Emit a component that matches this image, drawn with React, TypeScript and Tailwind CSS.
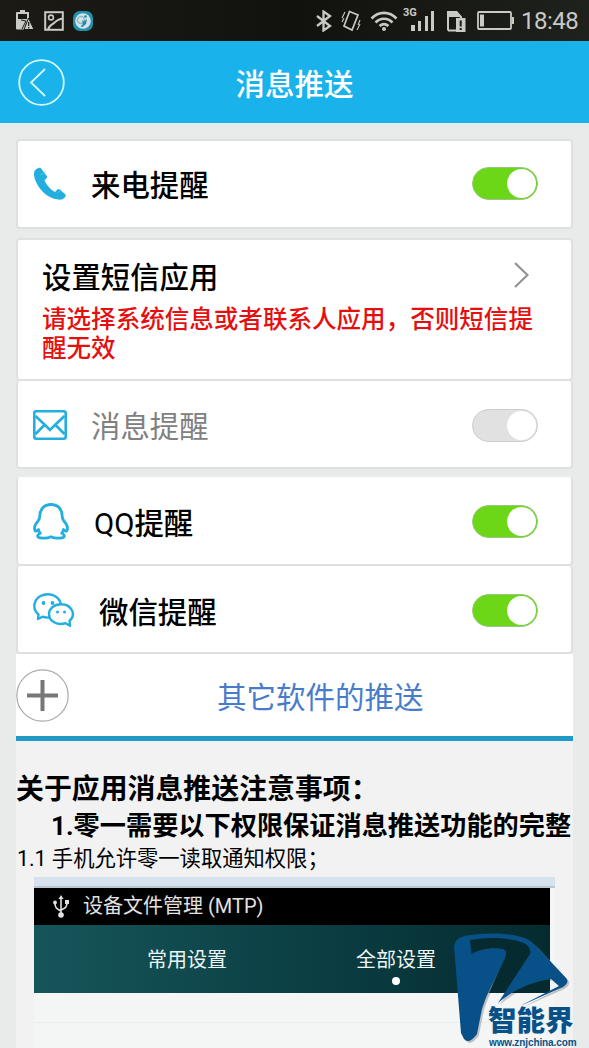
import React, { useState } from 'react';
import clsx from 'clsx';

const ICON_BLUE = '#22afdf';

function StatusBar() {
  return (
    <div className="flex h-[41px] items-center bg-gradient-to-r from-[#1c1a15] via-[#11120e] to-[#1f211c] px-4 text-[#c9c9c5]">
      <svg className="h-[22px] w-[18px]" viewBox="0 0 18 22" fill="currentColor">
        <path d="M4 2V0h5v2h4v8l-4.500 9.500H1a1 1 0 0 1-1-1V3a1 1 0 0 1 1-1zM2 4v5h9V4z" fillRule="evenodd" />
        <path d="M6 19l4-8-5-1" stroke="#191914" strokeWidth="1" fill="none" />
        <path d="M12.500 8L18 19.500H8z" stroke="#191914" strokeWidth="1" />
        <path d="M12.700 12v4M12.700 17v1.500" stroke="#191914" strokeWidth="1.200" />
      </svg>
      <svg className="ml-[10px] h-5 w-5" viewBox="0 0 20 20" fill="none" stroke="currentColor" strokeWidth="2">
        <rect x="1.200" y="1.200" width="17.600" height="17.600" />
        <circle cx="7" cy="6.500" r="2.400" strokeWidth="1.600" />
        <path d="M4 19c1-5 4-5 6-7s4-4 9-4.500" />
      </svg>
      <svg className="ml-[9px] h-5 w-5" viewBox="0 0 20 20">
        <rect width="20" height="20" rx="7" fill="#2390ae" />
        <circle cx="10" cy="10" r="7.800" fill="#d3e3e7" />
        <circle cx="8" cy="9" r="3.500" fill="none" stroke="#8fb9c6" strokeWidth="1.500" />
        <path d="M9 9l2 1.500 3-2.500-1 5-3.500 3-2-.5 2.500-2.500z" fill="#2185ad" />
        <circle cx="12.500" cy="5.500" r="1.300" fill="#2185ad" />
      </svg>

      <svg className="ml-auto h-[22px] w-4" viewBox="0 0 16 22" fill="none" stroke="currentColor" strokeWidth="2.300">
        <path d="M1 6l13 10-6.500 4.500v-19L14 6 1 16" />
      </svg>
      <svg className="ml-[9px] h-[22px] w-5" viewBox="0 0 20 22" fill="none" stroke="currentColor" strokeWidth="1.700">
        <path d="M8.500 1.500l8.500 3.500-6 15-8-4z" />
        <path d="M1 8l3-6M1 12l2-4M19 14l-3 6M19 10l-2 5" strokeWidth="1.100" />
      </svg>
      <svg className="ml-[9px] h-[22px] w-7" viewBox="0 0 28 22" fill="none" stroke="currentColor" strokeWidth="2.600">
        <path d="M1.500 8.500c7-7.500 18-7.500 25 0M5.500 12.500c5-5 12-5 17 0M9.500 16c3-2.500 6-2.500 9 0" />
        <circle cx="14" cy="19" r="2" fill="currentColor" stroke="none" />
      </svg>
      <div className="mb-[3px] ml-[5px] flex h-[24px] w-[33px] items-end">
        <span className="w-[8px] shrink-0 self-start font-['Roboto',sans-serif] text-[11px] leading-[11px] font-bold">3G</span>
        <span className="h-[6px] w-[4px] bg-current" />
        <span className="ml-[3px] h-[10px] w-[3px] bg-current" />
        <span className="ml-[4px] h-[15px] w-[3px] bg-current" />
        <span className="ml-[3px] h-[20px] w-[3px] bg-current" />
      </div>
      <svg className="ml-[11px] h-[22px] w-[19px]" viewBox="0 0 19 22" fill="none" stroke="currentColor">
        <path d="M1 20.500V2h8l5 5v2M1 20.500h8" strokeWidth="2" />
        <path d="M1 1h9l4 5v1H1z" fill="currentColor" stroke="none" />
        <rect x="9" y="8" width="9.500" height="14" fill="currentColor" stroke="none" />
        <path d="M13.700 10.500v6M13.700 18v2" stroke="#191914" strokeWidth="2" />
      </svg>
      <svg className="ml-[11px] h-[20px] w-[37px]" viewBox="0 0 37 20" fill="none" stroke="currentColor">
        <rect x="1" y="1" width="33" height="17" rx="1" strokeWidth="1.800" />
        <path d="M3 3.500h4v12H3z" fill="currentColor" stroke="none" />
        <path d="M36 6v7" strokeWidth="2" />
      </svg>
      <span className="-mr-[6px] ml-[7px] w-[58px] pt-px font-['Roboto',sans-serif] text-[24px] leading-6 tracking-[-0.5px]">18:48</span>
    </div>
  );
}

function Header() {
  return (
    <header className="grid h-[82px] grid-cols-[1fr_auto_1fr] items-center bg-[#19b2ea] pr-[18px] pl-[18px] text-white">
      <button type="button" aria-label="返回">
        <svg className="h-[47px] w-[47px]" viewBox="0 0 47 47" fill="none" stroke="#d3faff" strokeWidth="1.800">
          <circle cx="23.500" cy="23.500" r="22.300" />
          <path d="M27 10L13 23.500 27 37" />
        </svg>
      </button>
      <h1 className="pt-[5px] text-[29.5px] leading-9 font-medium">消息推送</h1>
    </header>
  );
}

function Toggle({ on, disabled, onChange }: { on: boolean; disabled?: boolean; onChange?: () => void }) {
  return (
    <button
      type="button"
      role="switch"
      aria-checked={on}
      disabled={disabled}
      onClick={onChange}
      className={clsx(
        'ml-auto flex h-[33px] w-[66px] items-center rounded-full border px-px',
        on || disabled ? 'justify-end' : 'justify-start',
        on ? 'border-[#9bc489] bg-[#6bd716]' : 'border-[#cdcdcd] bg-[#e1e1e1]'
      )}
    >
      <span className="h-[29px] w-[29px] rounded-full bg-white" />
    </button>
  );
}

function PhoneIcon() {
  return (
    <svg className="mt-[2px] h-[34px] w-[34px]" viewBox="0 0 34 34" fill={ICON_BLUE}>
      <path d="M5.500 1C2 2 .5 5 1 8.500 2.500 18 12 31 25 32.500c4 .5 6-.5 7.500-3 .5-1 .2-1.700-.6-2.400l-5-4.600c-.8-.8-1.700-.8-2.500 0l-2.400 2.400c-4.500-2-8.500-7-10.500-11.600l2-2c.8-.8.8-1.500.2-2.400L8.500 2C7.700 1 6.800.6 5.500 1z" />
      <path d="M7.500 8l5-3.500M24.500 26l4-3.500" stroke="#68c9eb" strokeWidth=".8" />
    </svg>
  );
}

function MailIcon() {
  return (
    <svg className="h-[30px] w-[34px]" viewBox="0 0 34 30" fill="none" stroke={ICON_BLUE} strokeWidth="2.600">
      <rect x="1.300" y="1.300" width="31.400" height="27.400" rx="2" />
      <path d="M2.500 6l9 8.500 5.500 5.500 5.500-5.500L31.500 6M2.500 24l9-9M31.500 24l-9-9" />
    </svg>
  );
}

function QQIcon() {
  return (
    <svg className="h-[37px] w-[36px]" viewBox="0 0 36 37" fill="none" stroke={ICON_BLUE} strokeWidth="2.800" strokeLinejoin="round">
      <path d="M18 1.500C11 1.500 6.800 6.500 6.800 13c0 2-.3 3.300-1.700 5C2.500 21 .8 25 2 27.500c.8 1.500 2.500 0 3.500-1 .3 1.500.8 2.700 1.800 3.700-2.300.8-3.200 2.800-2.200 4 2 1.500 9.400 1.300 12.900-.5 3.500 1.800 10.900 2 12.900.5 1-1.200.1-3.200-2.200-4 1-1 1.500-2.200 1.800-3.700 1 1 2.700 2.500 3.500 1 1.200-2.500-.5-6.500-3.100-9.500-1.400-1.700-1.700-3-1.700-5 0-6.500-4.200-11.500-11.200-11.500z" />
    </svg>
  );
}

function WechatIcon() {
  return (
    <svg className="h-[35px] w-[42px]" viewBox="0 0 42 35" fill="none" stroke={ICON_BLUE} strokeWidth="2.400" strokeLinejoin="round">
      <path d="M16 24.500c-2.500.3-4.500 0-6.500-.8L5 26l.5-4.500C-1 16 .5 7 7.500 3c8-4 18-1 20.500 8" />
      <path d="M28 11.200c-7 0-12 4.500-12 10S21 31 28 31c1.500 0 3-.2 4.500-.8l4.500 2.600-.5-4.800c7.500-7 1.500-16.800-8.500-16.800z" />
      <g fill={ICON_BLUE} stroke="none">
        <circle cx="10.500" cy="10" r="1.900" />
        <circle cx="19.500" cy="10" r="1.900" />
        <circle cx="24.500" cy="19" r="1.500" />
        <circle cx="31.500" cy="19" r="1.500" />
      </g>
    </svg>
  );
}

function Watermark() {
  const mark =
    'M3 15C5 6 12 4.500 24 3.500C45 1 66 3 78 9L86 16L115 47Q119 51 112 56L69 75L108 55L100 48C80 51 62 59 47 72L79 23Q81 17 73 12C57 6 37 6 19 9L20.500 23C29 18 42 16 52 18Q57 20 54 27L44 48C39 57 35 66 31 78L26 103Q18 114 13 108L10 102z';
  return (
    <div className="absolute top-[931px] left-[451px] h-[117px] w-[138px] text-[#075188]">
      <svg className="h-[117px] w-[138px]" viewBox="0 0 138 117">
        <path d={mark} transform="translate(1.800 1.800)" fill="#a9adaf" fillOpacity=".7" />
        {/* the seven is a dark cut-out while it is above the panel's lower edge */}
        <path d="M18 8C35 4 60 4 74 11L84 17 99 35V62H38L52 30 45 17 20 24z" fill="#052b30" />
        <path d={mark} fill="currentColor" />
        <path d="M100.500 49L107 55 100 58z" fill="#f2f4f6" />
      </svg>
      <div className="absolute top-[76px] left-[37px] text-[28.5px] leading-[30px] font-black whitespace-nowrap [paint-order:stroke_fill] [-webkit-text-stroke:2px_#f1f4f6]">
        智能界
      </div>
      <div className="absolute top-[106px] left-[38px] font-['Liberation_Sans',sans-serif] text-[10px] leading-[11px] font-bold tracking-[-0.1px] whitespace-nowrap">
        www.znjchina.com
      </div>
    </div>
  );
}

const cardClass = 'flex shrink-0 items-center rounded border-2 border-[#dfe1e1] bg-white pr-[33px] pl-[15px]';
const labelClass = 'text-[29.4px] leading-9 font-medium text-black';

export default function App() {
  const [enabled, setEnabled] = useState({ call: true, qq: true, wechat: true });

  const toggle = (key: keyof typeof enabled) => {
    setEnabled({ ...enabled, [key]: !enabled[key] });
  };

  return (
    <div className="relative h-[1048px] w-[589px] overflow-hidden bg-[#e9ebea] font-['Roboto','Noto_Sans_CJK_SC',sans-serif]">
      <StatusBar />
      <Header />

      <main className="mx-4 flex h-[925px] w-[557px] flex-col pt-4">
        <section className={clsx(cardClass, 'h-[90px] pb-[2px]')}>
          <PhoneIcon />
          <span className={clsx(labelClass, 'ml-[24px] pt-[5px]')}>来电提醒</span>
          <Toggle on={enabled.call} onChange={() => toggle('call')} />
        </section>

        <section className="mt-[9px] h-[143px] shrink-0 rounded border-2 border-[#dfe1e1] bg-white pt-[20px] pl-6">
          <div className="flex h-9 items-center justify-between pr-[42px]">
            <span className={labelClass}>设置短信应用</span>
            <svg className="h-[26px] w-[15px] -translate-y-[3px]" viewBox="0 0 15 26" fill="none" stroke="#929292" strokeWidth="2.200">
              <path d="M1 1l12.500 12L1 25" />
            </svg>
          </div>
          <p className="mt-[9px] w-[495px] text-[24.55px] leading-[29px] font-medium text-[#e60f0f]">
            请选择系统信息或者联系人应用，否则短信提醒无效
          </p>
        </section>
        <section className={clsx(cardClass, 'h-[88px] border-t-0 pt-[2px]')}>
          <MailIcon />
          <span className="ml-[24px] pt-[4px] text-[29.4px] leading-9 text-[#808080]">消息提醒</span>
          <Toggle on={false} disabled />
        </section>

        <section className={clsx(cardClass, 'mt-2 h-[89px] border-t-0 pt-[2px]')}>
          <QQIcon />
          <span className={clsx(labelClass, 'ml-[25px] pt-[5px]')}>
            <span className="font-normal">QQ</span>提醒
          </span>
          <Toggle on={enabled.qq} onChange={() => toggle('qq')} />
        </section>
        <section className={clsx(cardClass, 'h-[88px] border-t-0 pt-[2px]')}>
          <WechatIcon />
          <span className={clsx(labelClass, 'ml-[24px] pt-[5px]')}>微信提醒</span>
          <Toggle on={enabled.wechat} onChange={() => toggle('wechat')} />
        </section>

        <button type="button" className="flex h-[87px] shrink-0 items-center border-b-[5px] border-[#1f9ac7] bg-white">
          <svg className="h-[53px] w-[53px]" viewBox="0 0 53 53" fill="none">
            <circle cx="26.500" cy="26.500" r="25.700" stroke="#aaaaaa" strokeWidth="1.200" />
            <path d="M26.500 11v31M11 26.500h31" stroke="#777777" strokeWidth="4" />
          </svg>
          <span className="ml-[148px] pt-[5px] text-[29.5px] leading-9 text-[#487ccb]">其它软件的推送</span>
        </button>

        <section className="min-h-0 flex-1 bg-[#f2f2f2] pt-[30px] text-black">
          <h2 className="text-[27.9px] leading-[37px] font-bold whitespace-nowrap">关于应用消息推送注意事项：</h2>
          <h3 className="pl-[35px] text-[26.2px] leading-[37px] font-bold whitespace-nowrap">1.零一需要以下权限保证消息推送功能的完整</h3>
          <p className="-mt-px pl-px text-[21.3px] leading-[30px] whitespace-nowrap">1.1 手机允许零一读取通知权限；</p>

          <div className="mt-[3px] ml-[18px] w-[521px] bg-[#f4f5f5] text-[20px]">
            <div className="h-[11px] border-b-2 border-[#bcc7d1] bg-[#d6e3ee]" />
            <div className="w-[516px]">
              <div className="flex h-[37px] items-center bg-black pb-px pl-[19px] text-[#e2e2e2]">
                <svg className="h-[23px] w-4" viewBox="0 0 16 23" fill="none" stroke="currentColor" strokeWidth="1.600">
                  <path d="M8 20V3M8 16C5 14 2 14 2 8M8 15c4-2 6-2 6-8" />
                  <path d="M8 0l2.500 4h-5zM12 5h4v4h-4z" fill="currentColor" stroke="none" />
                  <circle cx="2" cy="7.500" r="1.900" fill="currentColor" stroke="none" />
                  <circle cx="8" cy="20" r="2.800" fill="currentColor" stroke="none" />
                </svg>
                <span className="ml-[14px] leading-6">设备文件管理 (MTP)</span>
              </div>
              <div className="flex h-[68px] bg-gradient-to-r from-[#15565a] via-[#0c4045] to-[#052b30] pt-[23px] text-[#edf5f5]">
                <span className="ml-[113px] leading-6">常用设置</span>
                <span className="ml-[129px] flex flex-col items-center leading-6">
                  全部设置
                  <i className="mt-[5px] h-[8px] w-[8px] rounded-full bg-white" />
                </span>
              </div>
            </div>
            <div className="h-[30px] border-b border-[#ebecec]" />
            <div className="h-[25px]" />
          </div>
        </section>
      </main>
      <Watermark />
    </div>
  );
}
